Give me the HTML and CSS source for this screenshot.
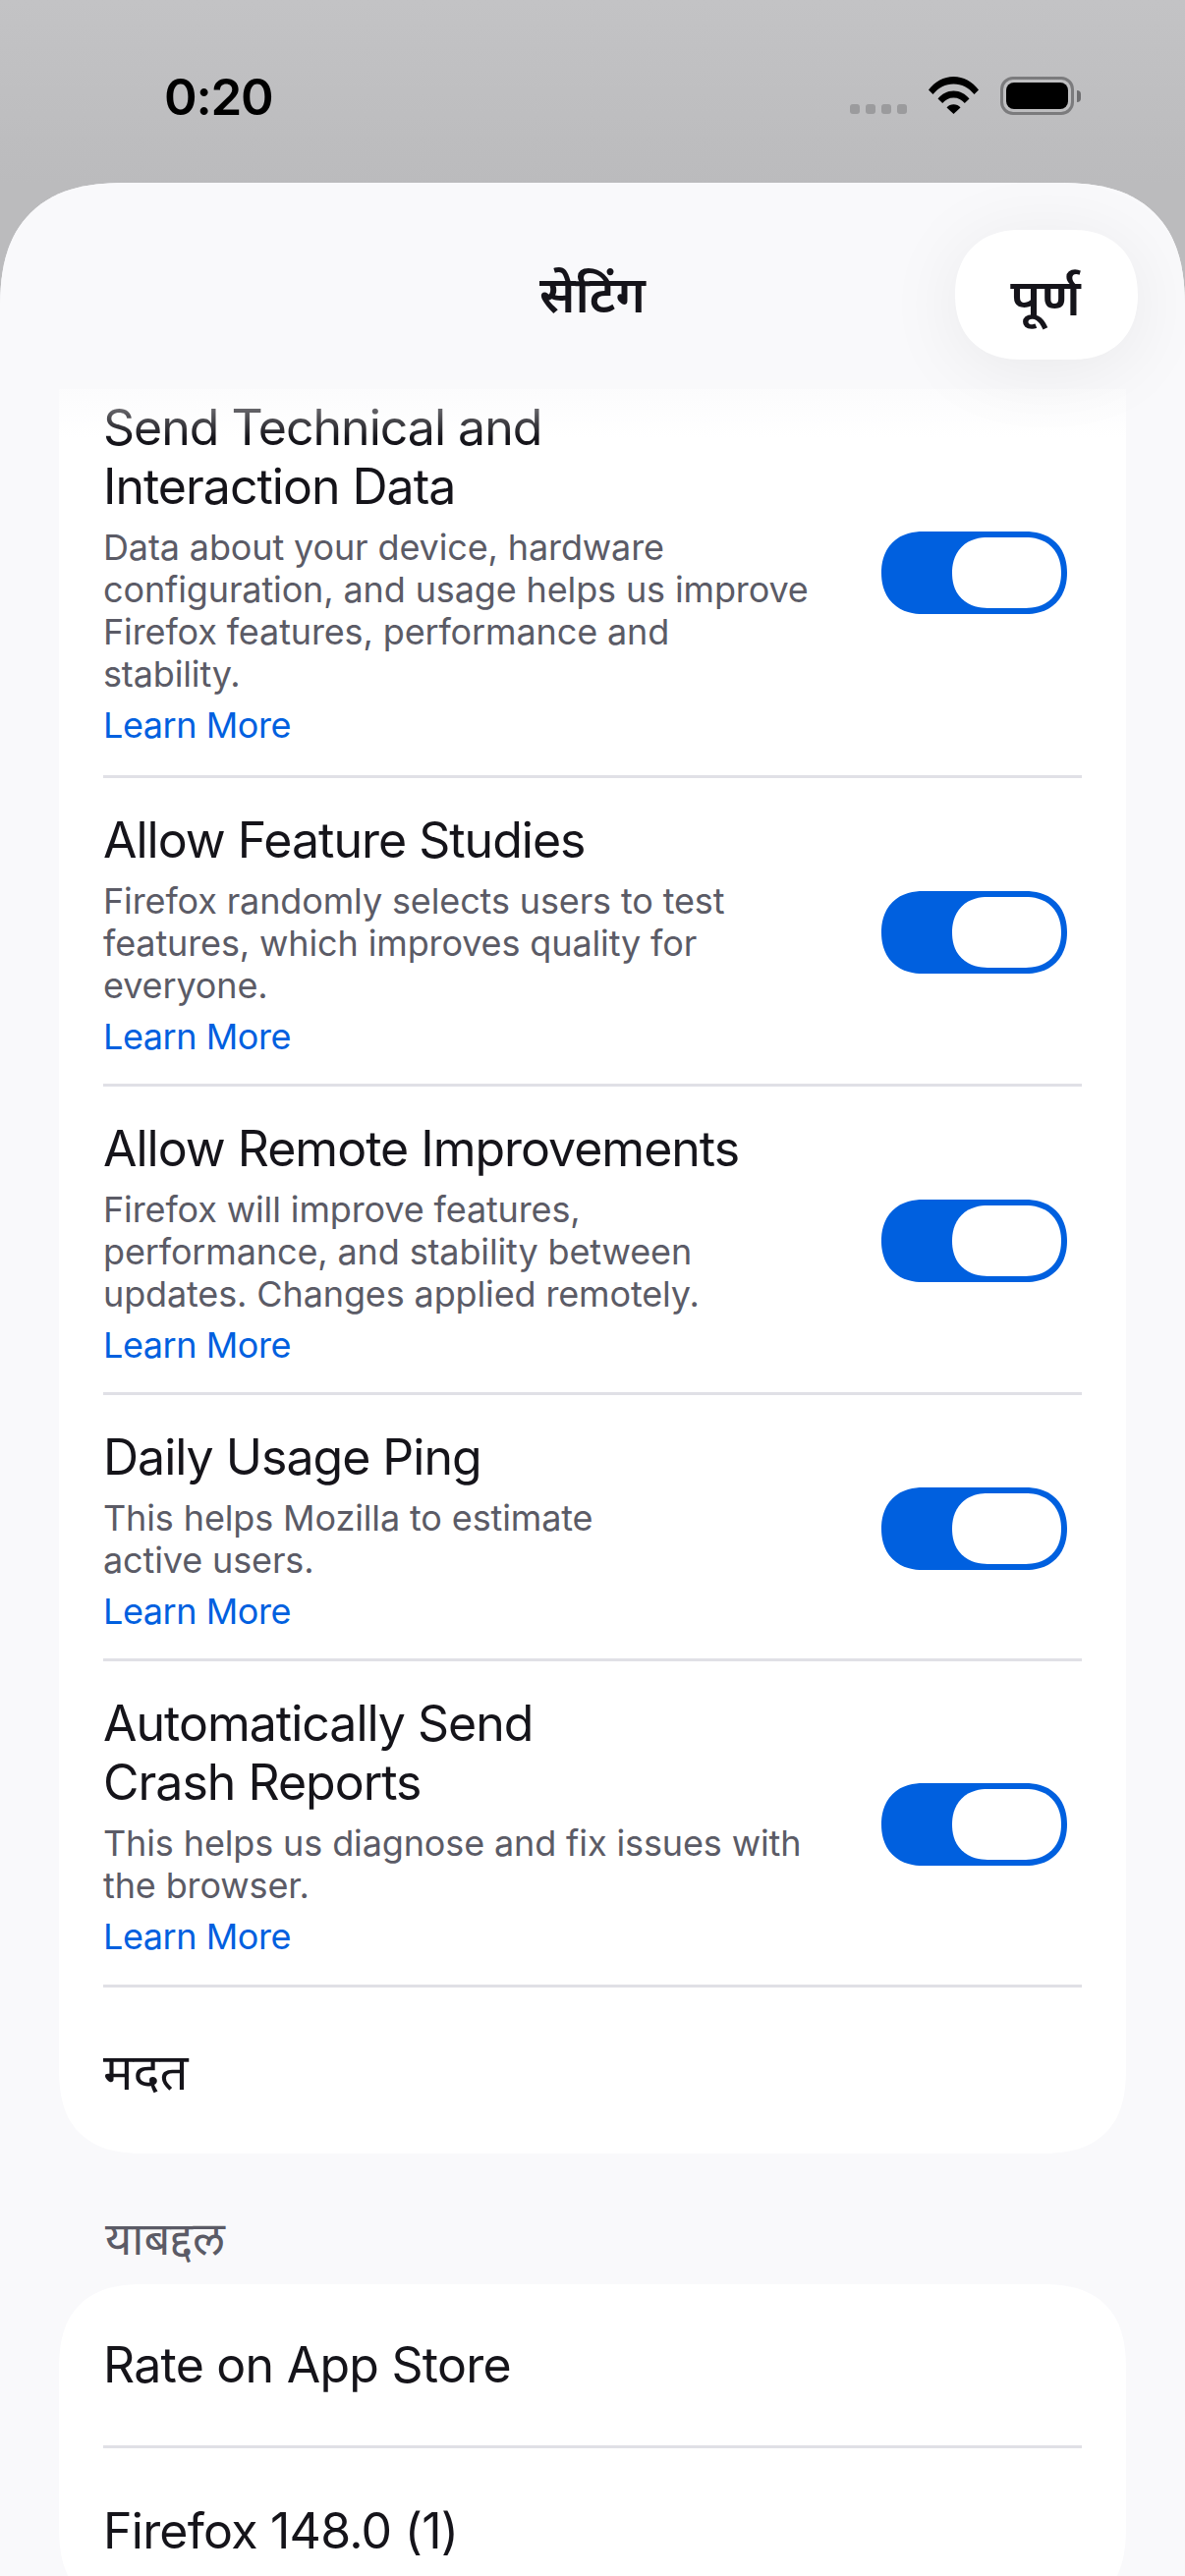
FILE: index.html
```html
<!DOCTYPE html>
<html lang="mr">

<head>
    <meta charset="UTF-8">
    <meta name="viewport" content="width=device-width, initial-scale=1.0">
    <title>सेटिंग</title>
    <link rel="stylesheet" href="styles.css">
</head>

<body>
    <div class="status-bar">
        <span class="status-time">0:20</span>
        <div class="status-icons">
            <div class="signal-dots"><i></i><i></i><i></i><i></i></div>
            <svg class="wifi-icon" width="51" height="38" viewBox="0 0 51 38">
                <path d="M0 13.5C6.5 5 15.5 0 25.5 0S44.500 5 51 13.500L46.500 18C41 11.500 34 7.500 25.500 7.500S10 11.500 4.500 18Z" />
                <path d="M9.500 22.500C13.500 17.500 19 14.500 25.500 14.500S37.500 17.500 41.500 22.500L36.800 27C33.800 23.500 30 21.500 25.500 21.500S17.200 23.500 14.200 27Z" />
                <path d="M18.500 31.500C20.300 29.500 22.700 28.300 25.500 28.300S30.700 29.500 32.500 31.500L25.500 38Z" />
            </svg>
            <div class="battery">
                <div class="battery-body"><div class="battery-fill"></div></div>
                <div class="battery-nub"></div>
            </div>
        </div>
    </div>

    <div class="sheet">
        <div class="sheet-header">
            <h1 class="sheet-title">सेटिंग</h1>
            <button class="done-btn">पूर्ण</button>
        </div>

        <div class="sheet-scroll">
            <div class="card">
                <div class="row row-first">
                    <div class="row-text">
                        <div class="row-title">Send Technical and<br>Interaction Data</div>
                        <div class="row-desc">Data about your device, hardware<br>configuration, and usage helps us improve<br>Firefox features, performance and<br>stability.</div>
                        <a class="row-link" href="#">Learn More</a>
                    </div>
                    <div class="toggle"><div class="toggle-knob"></div></div>
                </div>
                <div class="row">
                    <div class="row-text">
                        <div class="row-title">Allow Feature Studies</div>
                        <div class="row-desc">Firefox randomly selects users to test<br>features, which improves quality for<br>everyone.</div>
                        <a class="row-link" href="#">Learn More</a>
                    </div>
                    <div class="toggle"><div class="toggle-knob"></div></div>
                </div>
                <div class="row">
                    <div class="row-text">
                        <div class="row-title">Allow Remote Improvements</div>
                        <div class="row-desc">Firefox will improve features,<br>performance, and stability between<br>updates. Changes applied remotely.</div>
                        <a class="row-link" href="#">Learn More</a>
                    </div>
                    <div class="toggle"><div class="toggle-knob"></div></div>
                </div>
                <div class="row">
                    <div class="row-text">
                        <div class="row-title">Daily Usage Ping</div>
                        <div class="row-desc">This helps Mozilla to estimate<br>active users.</div>
                        <a class="row-link" href="#">Learn More</a>
                    </div>
                    <div class="toggle"><div class="toggle-knob"></div></div>
                </div>
                <div class="row row-tall">
                    <div class="row-text">
                        <div class="row-title">Automatically Send<br>Crash Reports</div>
                        <div class="row-desc">This helps us diagnose and fix issues with<br>the browser.</div>
                        <a class="row-link" href="#">Learn More</a>
                    </div>
                    <div class="toggle"><div class="toggle-knob"></div></div>
                </div>
                <div class="row-plain row-plain-last">मदत</div>
            </div>

            <div class="section-label">याबद्दल</div>

            <div class="card">
                <div class="row-plain row-plain-en">Rate on App Store</div>
                <div class="row-plain row-plain-en row-plain-version">Firefox 148.0 (1)</div>
            </div>
        </div>
    </div>
</body>

</html>
```

FILE: styles.css
```css
* {
    box-sizing: border-box;
}

body {
    font-family: 'Inter', 'Noto Sans', 'Noto Sans Devanagari', sans-serif;
    margin: 0;
    width: 1206px;
    height: 2622px;
    overflow: hidden;
    display: flex;
    flex-direction: column;
    background: linear-gradient(to bottom, #c3c3c5, #bbbbbd 186px);
    color: #15141a;
}

.status-bar {
    height: 186px;
    flex-shrink: 0;
    display: flex;
    justify-content: space-between;
    align-items: flex-start;
    padding: 68px 106px 0 167px;
}

.status-time {
    font-size: 51px;
    font-weight: 600;
    line-height: 62px;
    letter-spacing: -1.2px;
    color: #000;
}

.status-icons {
    display: flex;
    align-items: flex-start;
    padding-top: 10px;
}

.signal-dots {
    display: flex;
    gap: 6px;
    margin-top: 28px;
    margin-right: 22px;
}

.signal-dots i {
    width: 10px;
    height: 10px;
    border-radius: 3px;
    background-color: #9b9b9d;
}

.wifi-icon {
    fill: #000;
    margin-right: 22px;
}

.battery {
    display: flex;
    align-items: center;
}

.battery-body {
    width: 75px;
    height: 39px;
    border: 3px solid #7b7b7d;
    border-radius: 13px;
    padding: 3px;
}

.battery-fill {
    height: 100%;
    border-radius: 8px;
    background-color: #000;
}

.battery-nub {
    width: 4px;
    height: 12px;
    margin-left: 3px;
    border-radius: 0 6px 6px 0;
    background-color: #6e6e70;
}

.sheet {
    flex-grow: 1;
    display: flex;
    flex-direction: column;
    min-height: 0;
    overflow: hidden;
    background-color: #f9f9fb;
    border-radius: 130px 130px 0 0;
    corner-shape: superellipse(1.35);
}

.sheet-header {
    height: 210px;
    flex-shrink: 0;
    position: relative;
    z-index: 1;
    display: flex;
    justify-content: center;
    align-items: center;
    padding-top: 18px;
    background-color: #f9f9fb;
}

/* faint fade where the list slides under the header */
.sheet-header::after {
    content: "";
    position: absolute;
    left: 0;
    right: 0;
    top: 100%;
    height: 50px;
    background: linear-gradient(to bottom, rgba(249, 249, 251, 0.6), rgba(249, 249, 251, 0));
}

.sheet-title {
    margin: 0;
    font-size: 51px;
    font-weight: 600;
    line-height: 70px;
}

.done-btn {
    position: absolute;
    z-index: 1;
    top: 48px;
    right: 48px;
    width: 186px;
    height: 132px;
    padding: 0 2px 0 0;
    border: none;
    border-radius: 66px;
    corner-shape: superellipse(1.15);
    background-color: #fff;
    color: #15141a;
    font-family: inherit;
    font-size: 52px;
    font-weight: 600;
    box-shadow: 0 10px 80px rgba(0, 0, 0, 0.07);
}

.sheet-scroll {
    flex-grow: 1;
    min-height: 0;
    overflow: hidden;
    padding: 0 60px;
}

.card {
    background-color: #fff;
    border-radius: 88px;
    corner-shape: superellipse(1.35);
    padding: 0 45px;
}

.sheet-scroll .card:first-child {
    margin-top: -21px;
    border-radius: 0 0 88px 88px;
}

.row {
    display: flex;
    justify-content: space-between;
    align-items: center;
    padding: 33px 15px 26px 0;
    border-bottom: 3px solid #e0e0e6;
}

/* this row is cut by the header, its text sits a little higher */
.row-first {
    padding-top: 30px;
    padding-bottom: 29px;
}

.row-first .toggle {
    margin-top: 1px;
    margin-bottom: 0;
}

.row-tall {
    padding-bottom: 27px;
}

.row-title {
    font-size: 50px;
    line-height: 60px;
    letter-spacing: -1px;
}

.row-desc {
    margin-top: 11px;
    font-size: 36px;
    line-height: 43px;
    letter-spacing: -0.13px;
    color: #5b5b66;
}

.row-link {
    display: block;
    margin-top: 8px;
    font-size: 36px;
    line-height: 44px;
    letter-spacing: -0.45px;
    color: #0060df;
    text-decoration: none;
}

.toggle {
    width: 189px;
    height: 84px;
    flex-shrink: 0;
    display: flex;
    justify-content: flex-end;
    align-items: center;
    margin-bottom: 4px;
    padding-right: 6px;
    border-radius: 42px;
    corner-shape: superellipse(1.15);
    background-color: #0060df;
}

.toggle-knob {
    width: 111px;
    height: 72px;
    border-radius: 36px;
    corner-shape: superellipse(1.15);
    background-color: #fff;
}

.row-plain {
    height: 167px;
    display: flex;
    align-items: center;
    font-size: 51px;
    border-bottom: 3px solid #e0e0e6;
}

.row-plain-en {
    font-size: 50px;
    letter-spacing: -0.75px;
}

.row-plain-version {
    padding-top: 4px;
}

.row-plain-last {
    height: 169px;
    padding-bottom: 2px;
    border-bottom: none;
}

.section-label {
    height: 133px;
    padding: 56px 47px 0;
    font-size: 47px;
    line-height: 60px;
    color: #5b5b66;
}
```
